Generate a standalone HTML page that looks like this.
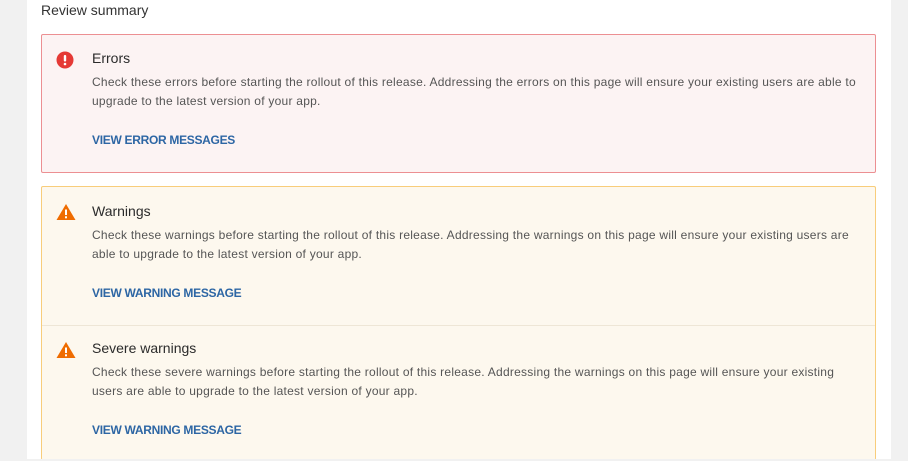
<!DOCTYPE html>
<html style="overflow:hidden;height:461px"><head><style>
body{margin:0;width:908px;height:461px;background:#f1f1f1;font-family:"Liberation Sans",sans-serif;position:relative;overflow:hidden}
.panel{position:absolute;left:27px;top:0;width:864px;height:459px;background:#fff}
.t{position:absolute;left:41px;top:2px;font-size:14px;color:#333}
.box{position:absolute;left:41px;width:833px}
.err{top:34px;height:137px;background:#fcf3f3;border:1px solid #ec8f92;border-radius:2px}
.warn{top:186px;height:273px;background:#fdf8ee;border:1px solid #f8cd7b;border-bottom:none;border-radius:2px}
.sec{position:absolute;left:50px;right:0}
h3{position:absolute;left:0;margin:0;font-size:14px;font-weight:normal;color:#2b2b2b;white-space:nowrap}
p{position:absolute;left:0;margin:0;font-size:12px;line-height:19px;color:#555;white-space:nowrap;letter-spacing:0.25px}
a{position:absolute;left:0;font-size:12px;font-weight:bold;color:#2d66a4;text-decoration:none;letter-spacing:-0.3px;white-space:nowrap}
.ico{position:absolute;left:-36px}
.div{position:absolute;left:0;right:0;top:138px;height:1px;background:#eee6d6}
.bot{position:absolute;left:0;top:459px;width:908px;height:2px;background:#f1f1f1}
</style></head><body>
<div class="panel"></div>
<div class="t">Review summary</div>
<div class="box err">
 <div class="sec" style="top:0">
  <svg class="ico" style="top:16px" width="18" height="18" viewBox="0 0 18 18"><circle cx="9" cy="9" r="8.5" fill="#e53935"/><rect x="7.8" y="4" width="2.4" height="6.5" rx="1" fill="#fff"/><circle cx="9" cy="13" r="1.3" fill="#fff"/></svg>
  <h3 style="top:15px">Errors</h3>
  <p style="top:38px">Check these errors before starting the rollout of this release. Addressing the errors on this page will ensure your existing users are able to<br>upgrade to the latest version of your app.</p>
  <a style="top:98px">VIEW ERROR MESSAGES</a>
 </div>
</div>
<div class="box warn">
 <div class="sec" style="top:0">
  <svg class="ico" style="top:16px" width="20" height="18" viewBox="0 0 20 18"><path d="M10 1 L19.5 17 L0.5 17 Z" fill="#ef6c00"/><rect x="9" y="6.5" width="2" height="5.5" fill="#fff"/><rect x="9" y="13.3" width="2" height="2" fill="#fff"/></svg>
  <h3 style="top:16px">Warnings</h3>
  <p style="top:39px">Check these warnings before starting the rollout of this release. Addressing the warnings on this page will ensure your existing users are<br>able to upgrade to the latest version of your app.</p>
  <a style="top:99px">VIEW WARNING MESSAGE</a>
 </div>
 <div class="div"></div>
 <div class="sec" style="top:138px">
  <svg class="ico" style="top:16px" width="20" height="18" viewBox="0 0 20 18"><path d="M10 1 L19.5 17 L0.5 17 Z" fill="#ef6c00"/><rect x="9" y="6.5" width="2" height="5.5" fill="#fff"/><rect x="9" y="13.3" width="2" height="2" fill="#fff"/></svg>
  <h3 style="top:15px">Severe warnings</h3>
  <p style="top:38px">Check these severe warnings before starting the rollout of this release. Addressing the warnings on this page will ensure your existing<br>users are able to upgrade to the latest version of your app.</p>
  <a style="top:98px">VIEW WARNING MESSAGE</a>
 </div>
</div>
<div class="bot"></div>
</body></html>
